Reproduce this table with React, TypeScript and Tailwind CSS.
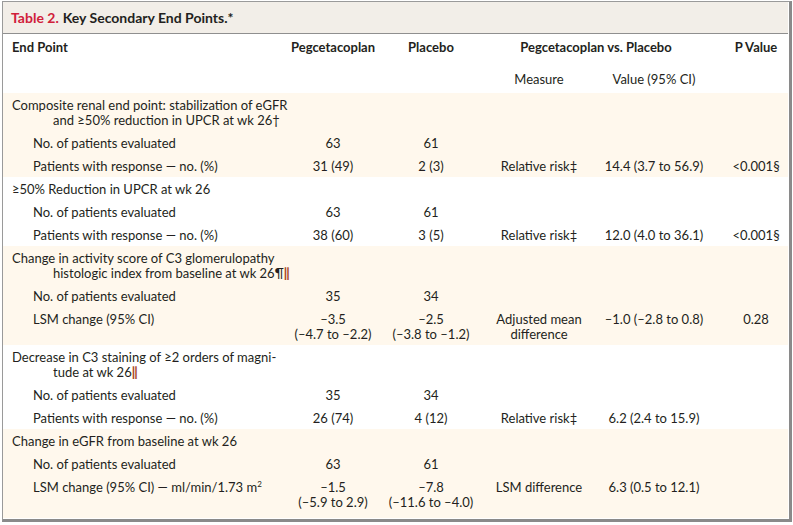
import React from 'react';

type Sub = {
  label: React.ReactNode;
  peg: string[];
  pla: string[];
  measure?: string[];
  value?: string;
  p?: string;
};

type Section = {
  title: React.ReactNode;
  beige: boolean;
  rows: Sub[];
  last?: boolean;
};

const bar = <span className="text-[#a8461c] font-black leading-[10px]">‖</span>;

const sections: Section[] = [
  {
    title: <>Composite renal end point: stabilization of eGFR and ≥50% reduction in UPCR at wk 26†</>,
    beige: true,
    rows: [
      { label: 'No. of patients evaluated', peg: ['63'], pla: ['61'] },
      {
        label: 'Patients with response — no. (%)',
        peg: ['31 (49)'],
        pla: ['2 (3)'],
        measure: ['Relative risk‡'],
        value: '14.4 (3.7 to 56.9)',
        p: '<0.001§',
      },
    ],
  },
  {
    title: <>≥50% Reduction in UPCR at wk 26</>,
    beige: false,
    rows: [
      { label: 'No. of patients evaluated', peg: ['63'], pla: ['61'] },
      {
        label: 'Patients with response — no. (%)',
        peg: ['38 (60)'],
        pla: ['3 (5)'],
        measure: ['Relative risk‡'],
        value: '12.0 (4.0 to 36.1)',
        p: '<0.001§',
      },
    ],
  },
  {
    title: <>Change in activity score of C3 glomerulopathy histologic index from baseline at wk 26¶{bar}</>,
    beige: true,
    rows: [
      { label: 'No. of patients evaluated', peg: ['35'], pla: ['34'] },
      {
        label: 'LSM change (95% CI)',
        peg: ['–3.5', '(–4.7 to –2.2)'],
        pla: ['–2.5', '(–3.8 to –1.2)'],
        measure: ['Adjusted mean', 'difference'],
        value: '–1.0 (–2.8 to 0.8)',
        p: '0.28',
      },
    ],
  },
  {
    title: <>Decrease in C3 staining of ≥2 orders of magni-<br />tude at wk 26{bar}</>,
    beige: false,
    rows: [
      { label: 'No. of patients evaluated', peg: ['35'], pla: ['34'] },
      {
        label: 'Patients with response — no. (%)',
        peg: ['26 (74)'],
        pla: ['4 (12)'],
        measure: ['Relative risk‡'],
        value: '6.2 (2.4 to 15.9)',
      },
    ],
  },
  {
    title: <>Change in eGFR from baseline at wk 26</>,
    beige: true,
    last: true,
    rows: [
      { label: 'No. of patients evaluated', peg: ['63'], pla: ['61'] },
      {
        label: (
          <>
            LSM change (95% CI) — ml/min/1.73 m<span className="text-[8px] leading-[8px] align-[5px]">2</span>
          </>
        ),
        peg: ['–1.5', '(–5.9 to 2.9)'],
        pla: ['–7.8', '(–11.6 to –4.0)'],
        measure: ['LSM difference'],
        value: '6.3 (0.5 to 12.1)',
      },
    ],
  },
];

const grid = 'grid grid-cols-[288px_84px_112px_104px_126px_70px]';

function Lines({ items }: { items?: string[] }) {
  if (!items) return <div />;
  return (
    <div className="text-center whitespace-nowrap">
      {items.map((t, i) => (
        <div key={i}>{t}</div>
      ))}
    </div>
  );
}

export default function App() {
  return (
    <div
      className="w-[793px] h-[525px] bg-white pl-[2px] pt-[1px] text-[13px] leading-[15px] text-[#231f20]"
      style={{ fontFamily: 'Lato, "Open Sans", sans-serif' }}
    >
      <div className="w-[790px] border-l border-t border-[#9a9a9a] border-r-[3px] border-b-[3px] border-r-[#8a8a8a] border-b-[#8a8a8a]">
        <div className="border-r border-b border-white">
          <div className="h-[32px] bg-[#f2eee8] border-b border-[#8f8f8f] pl-[8px] flex items-center text-[14px] font-bold">
            <span className="text-[#d0203a]">Table 2.</span>
            <span className="ml-[4px]">Key Secondary End Points.*</span>
          </div>

          <div className={`${grid} pt-[6px] font-bold`}>
            <div className="pl-[9px]">End Point</div>
            <div className="text-center whitespace-nowrap">Pegcetacoplan</div>
            <div className="text-center">Placebo</div>
            <div className="col-span-2 text-center pr-[12px]">Pegcetacoplan vs. Placebo</div>
            <div className="text-center pl-[8px] whitespace-nowrap">P Value</div>
          </div>
          <div className={`${grid} pt-[17px] pb-[6px]`}>
            <div />
            <div />
            <div />
            <div className="text-center">Measure</div>
            <div className="text-center">Value (95% CI)</div>
            <div />
          </div>

          {sections.map((s, si) => (
            <div
              key={si}
              className={`${s.beige ? 'bg-[#fff8ed]' : 'bg-white'} pt-[5px] ${s.last ? 'pb-[8px]' : 'pb-[3px]'}`}
            >
              <div className={grid}>
                <div className="pl-[50px] -indent-[41px]">{s.title}</div>
              </div>
              {s.rows.map((r, ri) => (
                <div key={ri} className={`${grid} pt-[8px]`}>
                  <div className="pl-[30px] whitespace-nowrap">{r.label}</div>
                  <Lines items={r.peg} />
                  <Lines items={r.pla} />
                  <Lines items={r.measure} />
                  <div className="text-center whitespace-nowrap">{r.value}</div>
                  <div className="text-center pl-[8px] whitespace-nowrap">{r.p}</div>
                </div>
              ))}
            </div>
          ))}
        </div>
      </div>
    </div>
  );
}
